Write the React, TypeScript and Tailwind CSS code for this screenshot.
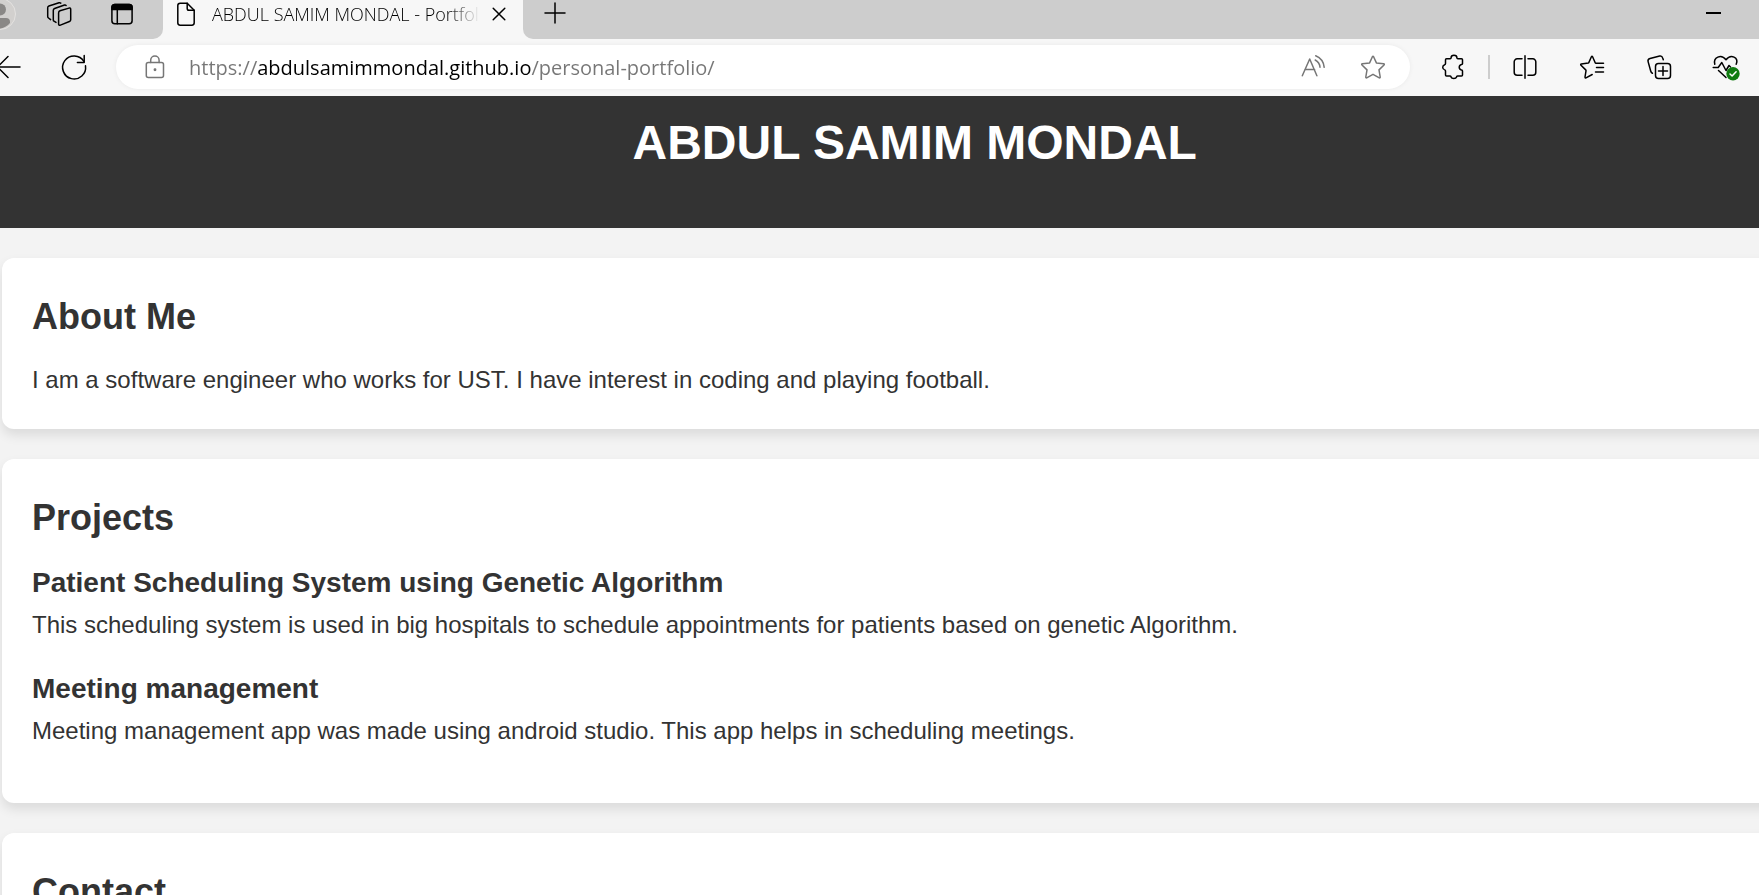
import type { ReactNode } from "react";

function Icon({ children, className = "" }: { children: ReactNode; className?: string }) {
  return (
    <svg
      viewBox="0 0 24 24"
      fill="none"
      stroke="currentColor"
      strokeWidth="1.5"
      strokeLinecap="round"
      strokeLinejoin="round"
      aria-hidden="true"
      className={`size-6 shrink-0 overflow-visible ${className}`}
    >
      {children}
    </svg>
  );
}

function BarButton({ label, className, children }: { label: string; className: string; children: ReactNode }) {
  return (
    <button type="button" aria-label={label} className={`flex shrink-0 items-center justify-center ${className}`}>
      {children}
    </button>
  );
}

function TabStrip() {
  return (
    <div className="flex h-[39px] bg-[#f7f7f7] text-black">
      <div className="flex w-[163px] shrink-0 items-start overflow-hidden rounded-br-[10px] bg-[#cdcdcd]">
        <BarButton label="Profile" className="-ml-4 h-7 w-8">
          <svg viewBox="0 0 32 32" className="size-8 shrink-0" aria-hidden="true">
            <circle cx="16" cy="16" r="15.5" fill="#d2d0ce" stroke="#e4e2e0" />
            <circle cx="16" cy="11.5" r="6" fill="#8a8886" />
            <path d="M6 28v-4q0-4 4-4h12q4 0 4 4v1A15 15 0 0 1 6 28z" fill="#8a8886" />
          </svg>
        </BarButton>
        <BarButton label="Workspaces" className="ml-3 h-7 w-[62px]">
          <Icon>
            <path d="M13 8.8 22 6.1q1.7-.4 1.7 1.2v10.4q0 1.3-1.3 1.8l-9 3.6q-1.8.6-1.8-1.2V11q0-1.6 1.4-2.2z" />
            <path d="M9 20.4 7 19.2q-.7-.4-.7-1.3V8.3q0-1.3 1.3-1.8L17.5 3q1-.3 1.6.4" />
            <path d="M3.6 17.6 1.5 16q-.8-.6-.8-1.5V5.7q0-1.3 1.2-1.7L12 .8q1-.3 1.8.3" />
          </Icon>
        </BarButton>
        <BarButton label="Tab actions" className="h-7 w-[64px]">
          <Icon>
            <rect x="1.9" y="2.5" width="20.2" height="19.3" rx="3" />
            <path d="M1.9 7.6V5.5a3 3 0 0 1 3-3h14.2a3 3 0 0 1 3 3v2.1z" fill="currentColor" />
            <path d="M7.3 8v13.8" />
          </Icon>
        </BarButton>
      </div>
      <div className="flex h-7 w-[360px] shrink-0 items-center pl-[11px]">
        <Icon>
          <path d="M6.2 1.2h7l7 7v12.6q0 2.4-2.4 2.4H6.200q-2.400 0-2.400-2.400V3.600q0-2.400 2.400-2.400z" />
          <path d="M13.200 1.200v5.200q0 1.800 1.800 1.800h5.200" />
        </Icon>
        <span className="ml-[14px] w-[268px] overflow-hidden mask-r-from-88% font-['Open_Sans',sans-serif] text-[18px] leading-7 font-light whitespace-nowrap">
          ABDUL SAMIM MONDAL - Portfolio
        </span>
        <BarButton label="Close tab" className="h-7 w-[38px]">
          <Icon>
            <path d="M6.200 6.200l11.600 11.600M17.800 6.200 6.200 17.800" />
          </Icon>
        </BarButton>
      </div>
      <div className="flex flex-1 items-start justify-between rounded-bl-[10px] bg-[#cdcdcd]">
        <BarButton label="New tab" className="h-[26px] w-[64px]">
          <Icon>
            <path d="M12 2v20M2 12h20" />
          </Icon>
        </BarButton>
        <BarButton label="Minimize" className="h-[26px] w-[92px]">
          <span className="h-[2px] w-[15px] bg-black" />
        </BarButton>
      </div>
    </div>
  );
}

function Toolbar() {
  return (
    <div className="flex h-[57px] items-center bg-[#f7f7f7] pb-px text-black">
      <BarButton label="Back" className="-ml-[25px] h-11 w-[66px]">
        <Icon>
          <path d="M24 12H.5M12 1.500 1.500 12 12 22.500" />
        </Icon>
      </BarButton>
      <BarButton label="Refresh" className="h-11 w-[66px]">
        <Icon>
          <path d="M23.500 10.800A11.500 11.500 0 1 1 21.900 6.400" />
          <path d="M22.200.600v6.800h-6.800" />
        </Icon>
      </BarButton>
      <form
        onSubmit={(e) => e.preventDefault()}
        className="mr-2 ml-[9px] flex h-11 min-w-0 flex-1 items-center rounded-full bg-white pr-[7px] shadow-[0_0_5px_rgba(0,0,0,0.06)]"
      >
        <BarButton label="Site information" className="h-11 w-[73px] pl-[5px] text-[#767676]">
          <Icon>
            <rect x="3.300" y="7.600" width="17.200" height="14.800" rx="2" />
            <path d="M7.700 7.600V5.300a4.200 4.200 0 0 1 8.400 0v2.300" />
            <circle cx="12" cy="14.800" r="1" fill="currentColor" stroke="none" />
            <circle cx="12" cy="14.800" r=".7" />
          </Icon>
        </BarButton>
        <input
          type="text"
          aria-label="Address"
          defaultValue="https://abdulsamimmondal.github.io/personal-portfolio/"
          className="h-11 min-w-0 flex-1 bg-[linear-gradient(90deg,#767676_68px,#000_68px,#000_342px,#767676_342px)] bg-clip-text font-['Open_Sans',sans-serif] text-[20px] text-transparent caret-black outline-none"
        />
        <BarButton label="Read aloud" className="h-11 w-[60px] text-[#767676]">
          <Icon>
            <path d="M1.300 20.700 8.700 4l7.200 16.700M3.900 14.500h9.700" />
            <path d="M14.200 5a9 9 0 0 1 4.800 7.300M14.700.800a14 14 0 0 1 8.500 11.500" />
          </Icon>
        </BarButton>
        <BarButton label="Add to favorites" className="h-11 w-[60px] text-[#767676]">
          <Icon>
            <path d="M11.400 1.700q.6-1 1.200 0l2.800 6.200 7.200.900q1.200.3.400 1.200l-5 4.900 1.200 7.100q.1 1.200-.9.800L12 19.300l-6.300 3.500q-1 .4-.9-.8L6 14.900 1 10q-.8-.9.400-1.200l7.200-.9z" />
          </Icon>
        </BarButton>
      </form>
      <BarButton label="Extensions" className="h-11 w-[70px]">
        <Icon>
          <path d="M5.500 3.800h3.600q1 0 1-1a2.900 2.500 0 0 1 5.800 0q0 1 1 1h3.600q1 0 1 1v4q0 .7-1 .8a2.800 2.800 0 0 0 0 5.500q1 .1 1 .8v4.100q0 1-1 1h-4q-.9 0-.9 1a2.900 2 0 0 1-5.600 0q0-1-.9-1H5.500q-1 0-1-1v-4q0-1-.8-1.100a2.700 2.700 0 0 1 0-5.200q.8-.2.800-1.100V4.800q0-1 1-1z" />
        </Icon>
      </BarButton>
      <div className="mr-px h-6 w-[2px] shrink-0 bg-[#cdcdcd]" />
      <BarButton label="Split screen" className="h-11 w-[67px]">
        <Icon>
          <path d="M9 3.800H4.200a3 3 0 0 0-3 3v10.400a3 3 0 0 0 3 3H9M15 3.800h4.800a3 3 0 0 1 3 3v10.400a3 3 0 0 1-3 3H15M12 .700v22.600" />
        </Icon>
      </BarButton>
      <BarButton label="Favorites" className="h-11 w-[67px]">
        <Icon>
          <path d="M23.500 8.300h-7.600q-.5 0-.7-.5l-2.600-6q-.6-1-1.200 0L8.900 7.400q-.2.500-.700.600L1.400 9q-1.200.3-.4 1.200l4.700 4.700q.4.400.3 1L5 22q0 1.200 1 .8l6.200-3.300M16.500 12.500h7M15.500 17h8" />
        </Icon>
      </BarButton>
      <BarButton label="Collections" className="h-11 w-[67px]">
        <Icon>
          <path d="M16.300 4.800 15.700 3q-.7-2.300-3-1.900L3 3.500Q.5 4.200 1.100 6.600L3.700 16q.4 1.700 1.700 2.200" />
          <rect x="8.500" y="8.500" width="15" height="15" rx="3" />
          <path d="M16 11.500v9M11.500 16h9" />
        </Icon>
      </BarButton>
      <BarButton label="Browser essentials" className="h-11 w-[67px]">
        <Icon>
          <path d="M.8 9.300C-1 2.500 7-1.500 12 4.800c5-6.300 13-2.300 10.200 4.500M4.500 15.500l7.500 7" />
          <path d="M-.8 12.500h5l3.600-5 4.200 8 3-5 1.500 1.500" />
          <circle cx="19" cy="18.700" r="6.700" fill="#107c10" stroke="none" />
          <path d="m16 19 2.100 2 4-4.300" stroke="#fff" />
        </Icon>
      </BarButton>
    </div>
  );
}

function Card({ title, children }: { title: string; children: ReactNode }) {
  return (
    <section className="rounded-xl bg-white p-[30px] shadow-[0_6px_12px_rgba(0,0,0,0.1)]">
      <h2 className="mb-[14px] text-[36px] leading-[58px] font-bold">{title}</h2>
      {children}
    </section>
  );
}

const projects = [
  {
    name: "Patient Scheduling System using Genetic Algorithm",
    text: "This scheduling system is used in big hospitals to schedule appointments for patients based on genetic Algorithm.",
  },
  {
    name: "Meeting management",
    text: "Meeting management app was made using android studio. This app helps in scheduling meetings.",
  },
];

export default function App() {
  return (
    <div className="h-screen overflow-hidden bg-[#f3f3f3]">
      <TabStrip />
      <Toolbar />
      <div className="w-[104%] font-['Liberation_Sans',Arial,sans-serif] text-[24px] leading-[39px] text-[#333]">
        <header className="h-[132px] bg-[#333] pt-2 text-center text-white">
          <h1 className="text-[48px] leading-[78px] font-bold">ABDUL SAMIM MONDAL</h1>
        </header>
        <main className="flex flex-col gap-[30px] py-[30px] pl-[2px]">
          <Card title="About Me">
            <p>I am a software engineer who works for UST. I have interest in coding and playing football.</p>
          </Card>
          <Card title="Projects">
            <ul>
              {projects.map((project) => (
                <li key={project.name} className="mb-[23px]">
                  <h3 className="text-[28px] leading-[44px] font-bold">{project.name}</h3>
                  <p>{project.text}</p>
                </li>
              ))}
            </ul>
          </Card>
          <Card title="Contact">{null}</Card>
        </main>
      </div>
    </div>
  );
}
